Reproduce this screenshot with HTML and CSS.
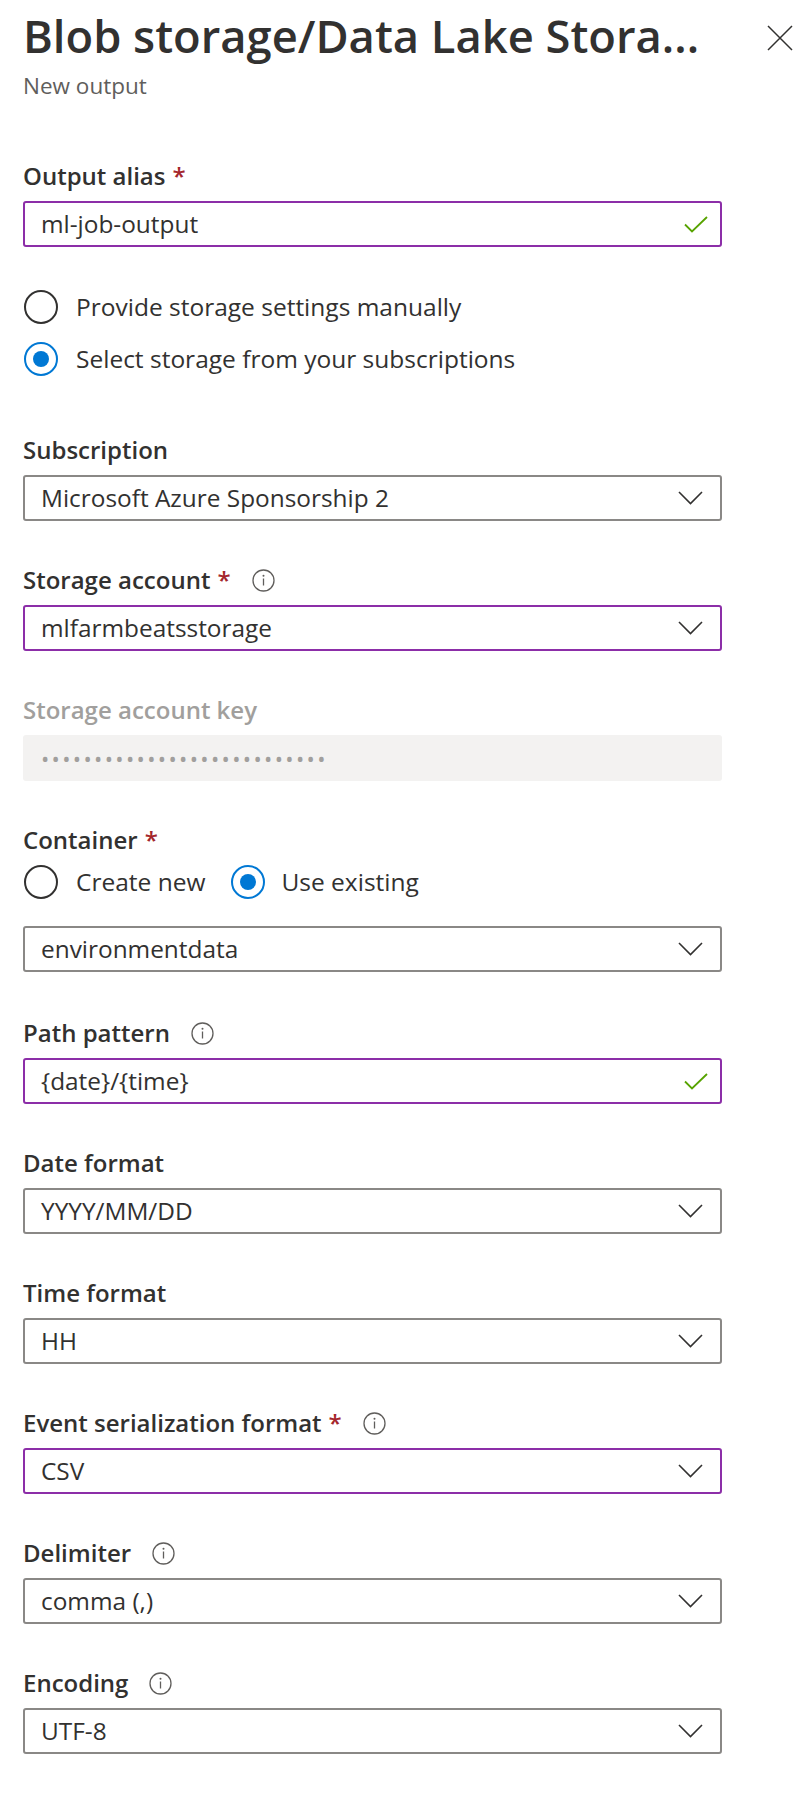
FILE: index.html
```html
<!DOCTYPE html>
<html lang="en">
<head>
<meta charset="utf-8">
<title>Blob storage/Data Lake Storage - New output</title>
<link rel="stylesheet" href="styles.css">
</head>
<body>
<div class="panel">
  <header class="header">
    <div class="titles">
      <h1 class="title">Blob storage/Data Lake Stora...</h1>
      <div class="subtitle">New output</div>
    </div>
    <button class="close" aria-label="Close">
      <svg width="26" height="26" viewBox="0 0 26 26"><path d="M1 1 L25 25 M25 1 L1 25" stroke="#323130" stroke-width="1.5" fill="none"/></svg>
    </button>
  </header>

  <div class="form">
    <div class="field">
      <div class="label">Output alias<span class="req">*</span></div>
      <div class="box dirty">
        <span class="value">ml-job-output</span>
        <svg class="check" width="24" height="17" viewBox="0 0 24 17"><path d="M1 8.5 L8 15.5 L23 1" stroke="#57a300" stroke-width="1.8" fill="none"/></svg>
      </div>
    </div>

    <div class="radio-group">
      <div class="radio"><span class="circle"></span><span class="radio-text">Provide storage settings manually</span></div>
      <div class="radio checked"><span class="circle"></span><span class="radio-text">Select storage from your subscriptions</span></div>
    </div>

    <div class="field gap-top">
      <div class="label">Subscription</div>
      <div class="box">
        <span class="value">Microsoft Azure Sponsorship 2</span>
        <svg class="chev" width="25" height="14" viewBox="0 0 25 14"><path d="M1 1 L12.5 12.5 L24 1" stroke="#323130" stroke-width="1.6" fill="none"/></svg>
      </div>
    </div>

    <div class="field">
      <div class="label">Storage account<span class="req">*</span>
        <svg class="info" width="23" height="23" viewBox="0 0 23 23"><circle cx="11.5" cy="11.5" r="10.5" stroke="#605e5c" stroke-width="1.3" fill="none"/><circle cx="11.5" cy="6.8" r="1" fill="#605e5c"/><path d="M11.5 9.5 V16.5" stroke="#605e5c" stroke-width="1.3"/></svg>
      </div>
      <div class="box dirty">
        <span class="value">mlfarmbeatsstorage</span>
        <svg class="chev" width="25" height="14" viewBox="0 0 25 14"><path d="M1 1 L12.5 12.5 L24 1" stroke="#323130" stroke-width="1.6" fill="none"/></svg>
      </div>
    </div>

    <div class="field">
      <div class="label disabled">Storage account key</div>
      <div class="box readonly">
        <span class="dots">•••••••••••••••••••••••••••</span>
      </div>
    </div>

    <div class="field container-field">
      <div class="label">Container<span class="req">*</span></div>
      <div class="radio-inline">
        <div class="radio"><span class="circle"></span><span class="radio-text">Create new</span></div>
        <div class="radio checked"><span class="circle"></span><span class="radio-text">Use existing</span></div>
      </div>
      <div class="box">
        <span class="value">environmentdata</span>
        <svg class="chev" width="25" height="14" viewBox="0 0 25 14"><path d="M1 1 L12.5 12.5 L24 1" stroke="#323130" stroke-width="1.6" fill="none"/></svg>
      </div>
    </div>

    <div class="field">
      <div class="label">Path pattern
        <svg class="info" width="23" height="23" viewBox="0 0 23 23"><circle cx="11.5" cy="11.5" r="10.5" stroke="#605e5c" stroke-width="1.3" fill="none"/><circle cx="11.5" cy="6.8" r="1" fill="#605e5c"/><path d="M11.5 9.5 V16.5" stroke="#605e5c" stroke-width="1.3"/></svg>
      </div>
      <div class="box dirty">
        <span class="value">{date}/{time}</span>
        <svg class="check" width="24" height="17" viewBox="0 0 24 17"><path d="M1 8.5 L8 15.5 L23 1" stroke="#57a300" stroke-width="1.8" fill="none"/></svg>
      </div>
    </div>

    <div class="field">
      <div class="label">Date format</div>
      <div class="box">
        <span class="value">YYYY/MM/DD</span>
        <svg class="chev" width="25" height="14" viewBox="0 0 25 14"><path d="M1 1 L12.5 12.5 L24 1" stroke="#323130" stroke-width="1.6" fill="none"/></svg>
      </div>
    </div>

    <div class="field">
      <div class="label">Time format</div>
      <div class="box">
        <span class="value">HH</span>
        <svg class="chev" width="25" height="14" viewBox="0 0 25 14"><path d="M1 1 L12.5 12.5 L24 1" stroke="#323130" stroke-width="1.6" fill="none"/></svg>
      </div>
    </div>

    <div class="field">
      <div class="label">Event serialization format<span class="req">*</span>
        <svg class="info" width="23" height="23" viewBox="0 0 23 23"><circle cx="11.5" cy="11.5" r="10.5" stroke="#605e5c" stroke-width="1.3" fill="none"/><circle cx="11.5" cy="6.8" r="1" fill="#605e5c"/><path d="M11.5 9.5 V16.5" stroke="#605e5c" stroke-width="1.3"/></svg>
      </div>
      <div class="box dirty">
        <span class="value">CSV</span>
        <svg class="chev" width="25" height="14" viewBox="0 0 25 14"><path d="M1 1 L12.5 12.5 L24 1" stroke="#323130" stroke-width="1.6" fill="none"/></svg>
      </div>
    </div>

    <div class="field">
      <div class="label">Delimiter
        <svg class="info" width="23" height="23" viewBox="0 0 23 23"><circle cx="11.5" cy="11.5" r="10.5" stroke="#605e5c" stroke-width="1.3" fill="none"/><circle cx="11.5" cy="6.8" r="1" fill="#605e5c"/><path d="M11.5 9.5 V16.5" stroke="#605e5c" stroke-width="1.3"/></svg>
      </div>
      <div class="box">
        <span class="value">comma (,)</span>
        <svg class="chev" width="25" height="14" viewBox="0 0 25 14"><path d="M1 1 L12.5 12.5 L24 1" stroke="#323130" stroke-width="1.6" fill="none"/></svg>
      </div>
    </div>

    <div class="field">
      <div class="label">Encoding
        <svg class="info" width="23" height="23" viewBox="0 0 23 23"><circle cx="11.5" cy="11.5" r="10.5" stroke="#605e5c" stroke-width="1.3" fill="none"/><circle cx="11.5" cy="6.8" r="1" fill="#605e5c"/><path d="M11.5 9.5 V16.5" stroke="#605e5c" stroke-width="1.3"/></svg>
      </div>
      <div class="box">
        <span class="value">UTF-8</span>
        <svg class="chev" width="25" height="14" viewBox="0 0 25 14"><path d="M1 1 L12.5 12.5 L24 1" stroke="#323130" stroke-width="1.6" fill="none"/></svg>
      </div>
    </div>
  </div>
</div>
</body>
</html>
```

FILE: styles.css
```css
* { box-sizing: border-box; }

html, body {
  margin: 0;
  padding: 0;
  background: #ffffff;
}

body {
  font-family: "Open Sans", "Noto Sans", "Liberation Sans", sans-serif;
  color: #323130;
}

.panel {
  width: 804px;
  padding: 0 0 40px 23px;
}

.header {
  display: flex;
  justify-content: space-between;
  align-items: flex-start;
}

.titles {
  display: flex;
  flex-direction: column;
}

.title {
  margin: 10px 0 0 0;
  font-size: 45.3px;
  line-height: 52px;
  font-weight: 600;
  color: #323130;
  white-space: nowrap;
}

.subtitle {
  margin-top: 9px;
  font-size: 22.5px;
  line-height: 30px;
  color: #605e5c;
}

.close {
  margin: 25px 11px 0 0;
  padding: 0;
  border: 0;
  background: transparent;
  width: 26px;
  height: 26px;
  display: flex;
}

.form {
  margin-top: 60px;
  display: flex;
  flex-direction: column;
  gap: 44px;
  width: 699px;
}

.field {
  display: flex;
  flex-direction: column;
}

.gap-top { margin-top: 12px; }
.container-field { margin-bottom: 2px; }

.label {
  display: flex;
  align-items: center;
  height: 30px;
  margin-bottom: 10px;
  font-size: 24px;
  line-height: 30px;
  font-weight: 600;
  color: #323130;
  white-space: nowrap;
}

.label.disabled { color: #a19f9d; }

.req {
  margin-left: 7px;
  color: #a4262c;
  font-weight: 600;
}

.info {
  margin-left: 21px;
  flex: none;
}

.box {
  height: 46px;
  border: 2px solid #8a8886;
  border-radius: 3px;
  display: flex;
  align-items: center;
  justify-content: space-between;
  padding: 0 17px 0 16px;
  font-size: 24.4px;
  line-height: 30px;
  color: #323130;
}

.box.dirty { border-color: #8c2ea8; }

.box .check { margin-right: -5px; }

.box.readonly {
  border: 0;
  background: #f3f2f1;
  padding-left: 18px;
  height: 46px;
}

.dots {
  font-size: 22px;
  letter-spacing: 2.35px;
  color: #a19f9d;
}

.value { white-space: nowrap; }

.radio-group {
  margin-top: -4px;
  display: flex;
  flex-direction: column;
  gap: 12px;
}

.radio {
  display: flex;
  align-items: center;
  height: 40px;
  font-size: 24.5px;
  line-height: 30px;
  color: #323130;
}

.circle {
  flex: none;
  width: 34px;
  height: 34px;
  margin-left: 1px;
  margin-right: 18px;
  border: 2px solid #323130;
  border-radius: 50%;
  display: flex;
  align-items: center;
  justify-content: center;
}

.radio.checked .circle { border-color: #0078d4; }

.radio.checked .circle::after {
  content: "";
  width: 16px;
  height: 16px;
  border-radius: 50%;
  background: #0078d4;
}

.radio-inline {
  display: flex;
  gap: 25px;
  margin-bottom: 27px;
}

.radio-inline .radio { height: 34px; }
.radio-inline .radio.checked .circle { margin-right: 16px; }
```
